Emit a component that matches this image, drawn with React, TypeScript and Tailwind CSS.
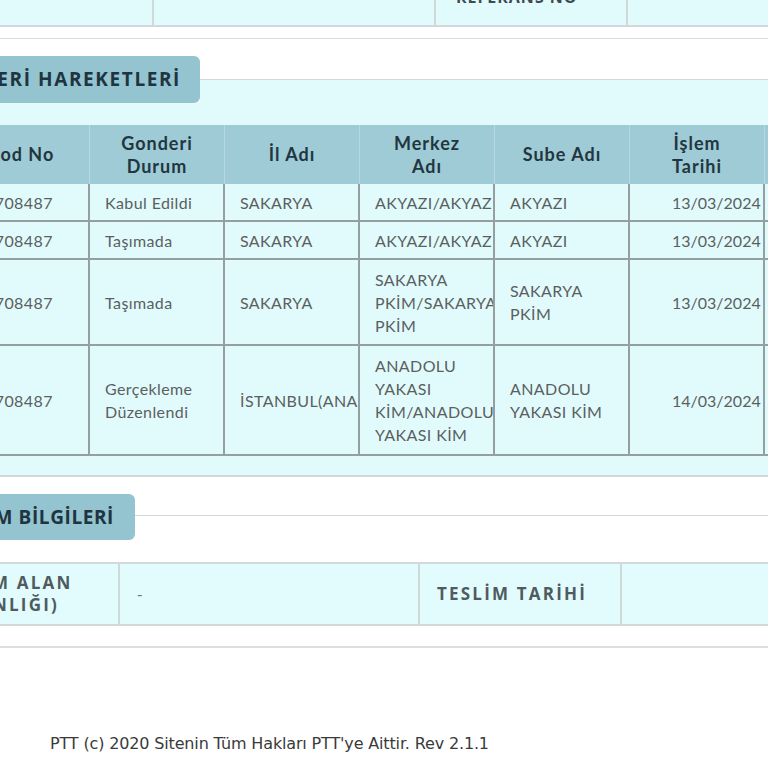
import React from "react";

type Row = { h: string; cells: string[][] };

const code = "KP0227708487";

const rows: Row[] = [
  { h: "h-[38px]", cells: [[code], ["Kabul Edildi"], ["SAKARYA"], ["AKYAZI/AKYAZI"], ["AKYAZI"], ["13/03/2024"], [""]] },
  { h: "h-[38px]", cells: [[code], ["Taşımada"], ["SAKARYA"], ["AKYAZI/AKYAZI"], ["AKYAZI"], ["13/03/2024"], [""]] },
  { h: "h-[86px]", cells: [[code], ["Taşımada"], ["SAKARYA"], ["SAKARYA", "PKİM/SAKARYA", "PKİM"], ["SAKARYA", "PKİM"], ["13/03/2024"], [""]] },
  { h: "h-[110px]", cells: [[code], ["Gerçekleme", "Düzenlendi"], ["İSTANBUL(ANADOLU)"], ["ANADOLU", "YAKASI", "KİM/ANADOLU", "YAKASI KİM"], ["ANADOLU", "YAKASI KİM"], ["14/03/2024"], [""]] },
];

const heads: string[][] = [["Barkod No"], ["Gonderi", "Durum"], ["İl Adı"], ["Merkez", "Adı"], ["Sube Adı"], ["İşlem", "Tarihi"], ["Açıklama"]];

function Tab({ title, tabClass, textClass, lineH, cyan }: { title: string; tabClass: string; textClass: string; lineH: string; cyan: boolean }) {
  return (
    <div className="flex">
      <div className={`${tabClass} shrink-0 rounded-[6px] bg-[#93c4cf] flex items-center justify-end`}>
        <span className={`font-['Open_Sans',sans-serif] font-bold text-[19px] ${textClass} text-[#1f3441] whitespace-nowrap`}>{title}</span>
      </div>
      <div className="flex-1 flex flex-col">
        <div className={`${lineH} border-b border-[#d6d9da]`} />
        <div className={cyan ? "flex-1 bg-[#e1fbfc]" : "flex-1"} />
      </div>
    </div>
  );
}

export default function App() {
  return (
    <div className="w-[768px] h-[768px] overflow-hidden bg-white font-['Lato',sans-serif]">
      {/* previous panel, only its bottom shows */}
      <div className="-mt-[60px] flex h-[87px] border-b-2 border-[#cfd9da] bg-[#e1fbfc]">
        <div className="w-[154px] shrink-0 border-r-2 border-[#d0d8d9]" />
        <div className="w-[282px] shrink-0 border-r-2 border-[#d0d8d9]" />
        <div className="w-[192px] shrink-0 border-r-2 border-[#d0d8d9] pt-[24px] pl-[20px] font-['Open_Sans',sans-serif] font-bold text-[16px] leading-[22px] tracking-[1px] text-[#3d4a50]">
          <div>GÖNDERİCİ</div>
          <div>REFERANS NO</div>
        </div>
        <div className="flex-1" />
      </div>

      <div className="mt-[11px] border-t border-[#d9dcdc] pt-[17px]">
        <Tab title="GÖNDERİ HAREKETLERİ" tabClass="w-[320px] -ml-[120px] h-[47px] pr-[19px]" textClass="tracking-[1.6px]" lineH="h-[24px]" cyan />
        <div className="bg-[#e1fbfc] pt-[22px] pb-[19px] border-b-2 border-[#d3d9da]">
          <div className="-ml-[75px] grid grid-cols-[165px_135px_135px_135px_135px_135px_135px]">
            {heads.map((hd, i) => (
              <div key={i} className="h-[59px] bg-[#9ecbd5] border-r border-[#b7d8df] flex flex-col items-center justify-center text-center font-bold text-[18px] leading-[23px] tracking-[1px] text-[#223640]">
                {hd.map((l, j) => <div key={j} className="whitespace-nowrap">{l}</div>)}
              </div>
            ))}
            {rows.map((r, ri) =>
              r.cells.map((c, ci) => (
                <div key={ri + "-" + ci} className={`${r.h} border-r-2 border-b-2 border-[#959fa1] flex flex-col justify-center overflow-hidden ${ci === 5 ? "pl-[42px] tracking-normal" : ci === 0 ? "pl-[10px] tracking-[0.4px]" : "pl-[15px] tracking-[0.4px]"} text-[16px] leading-[23px] text-[#5b5f60]`}>
                  {c.map((l, j) => <div key={j} className="whitespace-nowrap">{l}</div>)}
                </div>
              ))
            )}
          </div>
        </div>

        <div className="pt-[17px] pb-[20px] border-b-2 border-[#dcdfdf]">
          <Tab title="TESLİM BİLGİLERİ" tabClass="w-[260px] -ml-[125px] h-[46px] pr-[21px]" textClass="tracking-[0.6px]" lineH="h-[22px]" cyan={false} />
          <div className="mt-[22px] -ml-[80px] grid grid-cols-[200px_300px_202px_1fr] h-[64px] border-y-2 border-[#d3d9da] bg-[#e2fcfd] font-['Open_Sans',sans-serif] text-[17px] text-[#4f5b5f]">
            <div className="border-r-2 border-[#d0d8d9] flex flex-col justify-center pl-[17px] font-bold leading-[22px] tracking-[2.2px]">
              <div className="whitespace-nowrap">TESLİM ALAN</div>
              <div className="whitespace-nowrap">(YAKINLIĞI)</div>
            </div>
            <div className="border-r-2 border-[#d0d8d9] flex items-center pl-[17px] text-[#777]">-</div>
            <div className="border-r-2 border-[#d0d8d9] flex items-center pl-[17px] font-bold tracking-[2.2px] whitespace-nowrap">TESLİM TARİHİ</div>
            <div />
          </div>
        </div>
      </div>

      <div className="mt-[87px] pl-[50px] font-['DejaVu_Sans',sans-serif] text-[16px] leading-[18px] tracking-[-0.15px] text-[#3a3a3a]">
        PTT (c) 2020 Sitenin Tüm Hakları PTT'ye Aittir. Rev 2.1.1
      </div>
    </div>
  );
}
